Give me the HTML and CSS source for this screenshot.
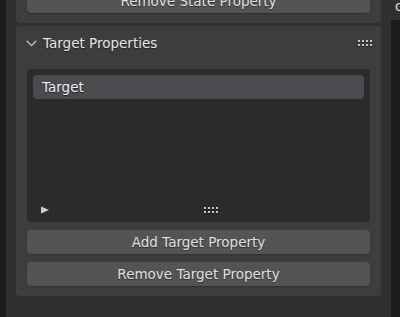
FILE: index.html
```html
<!DOCTYPE html>
<html>
<head>
  <title>Target Properties</title>
  <link rel="stylesheet" href="styles.css">
</head>
<body>
  <div class="edge-left"></div>

  <div class="properties">
    <div class="panel panel-prev">
      <button class="button button-cut">Remove State Property</button>
    </div>

    <div class="panel">
      <div class="panel-header">
        <svg class="chevron" width="11" height="7" viewBox="0 0 11 7">
          <path d="M0.7 0.7 L5.5 5.5 L10.3 0.7" fill="none" stroke="#bdbdbd" stroke-width="1.3"/>
        </svg>
        <span class="panel-title">Target Properties</span>
        <div class="grip grip-header">
          <i></i><i></i><i></i><i></i>
          <i></i><i></i><i></i><i></i>
        </div>
      </div>

      <div class="panel-body">
        <div class="list">
          <div class="list-item">Target</div>
          <div class="list-footer">
            <svg class="expand" width="8" height="8" viewBox="0 0 8 8">
              <path d="M0 0.5 L8 4 L0 7.5 Z" fill="#cfcfcf"/>
            </svg>
            <div class="grip grip-list">
              <i></i><i></i><i></i><i></i>
              <i></i><i></i><i></i><i></i>
            </div>
          </div>
        </div>

        <button class="button">Add Target Property</button>
        <button class="button">Remove Target Property</button>
      </div>
    </div>
  </div>

  <div class="edge-right">
    <div class="edge-right-header">c</div>
  </div>
</body>
</html>
```

FILE: styles.css
```css
html, body {
  margin: 0;
  height: 100%;
}

body {
  display: flex;
  background-color: #303030;
  font-family: 'DejaVu Sans', 'Liberation Sans', sans-serif;
  font-size: 13.5px;
  color: #e6e6e6;
  overflow: hidden;
}

.edge-left {
  width: 6px;
  flex-shrink: 0;
  background-color: #1d1d1d;
}

.properties {
  width: 365px;
  flex-shrink: 0;
  padding: 0 10px;
  display: flex;
  flex-direction: column;
  gap: 3px;
}

.panel {
  background-color: #3d3d3d;
  border-radius: 4px;
}

.panel-prev {
  padding: 0 11px 10px;
  border-radius: 0 0 4px 4px;
}

.panel-header {
  height: 34px;
  display: flex;
  align-items: center;
  padding: 0 9px 0 10px;
}

.chevron {
  margin-top: 1px;
}

.panel-title {
  margin-left: 6px;
  flex: 1;
  text-shadow: 0 1px 1px rgba(0, 0, 0, 0.45);
}

.panel-body {
  padding: 9px 11px 10px;
  display: flex;
  flex-direction: column;
  gap: 8px;
}

.list {
  height: 153px;
  background-color: #2b2b2b;
  border-radius: 4px;
  padding: 6px;
  box-sizing: border-box;
  display: flex;
  flex-direction: column;
}

.list-item {
  height: 24px;
  line-height: 24px;
  padding-left: 9px;
  background-color: #4a4a4f;
  border-radius: 4px;
  color: #ececec;
  text-shadow: 0 1px 1px rgba(0, 0, 0, 0.45);
}

.list-footer {
  margin-top: auto;
  height: 13px;
  display: flex;
  align-items: center;
  padding-left: 8px;
}

.grip {
  display: grid;
  grid-template-columns: repeat(4, 2px);
  grid-auto-rows: 2px;
  gap: 2px;
}

.grip i {
  background-color: #c8c8c8;
  box-shadow: 0 1px 0 rgba(0, 0, 0, 0.5);
}

.grip-list {
  margin-left: 155px;
}

.button {
  display: block;
  width: 100%;
  height: 24px;
  padding: 0;
  border: none;
  border-radius: 4px;
  background-color: #545454;
  color: #e0e0e0;
  font-family: inherit;
  font-size: 13.5px;
  text-shadow: 0 1px 1px rgba(0, 0, 0, 0.45);
  box-shadow: 0 1px 1px rgba(0, 0, 0, 0.2);
}

.button-cut {
  margin-top: -11px;
}

.edge-right {
  flex: 1;
  min-width: 0;
  background-color: #1d1d1d;
}

.edge-right-header {
  height: 20px;
  background-color: #303030;
  padding-left: 4px;
  line-height: 12px;
  color: #e0e0e0;
  overflow: hidden;
}
```
